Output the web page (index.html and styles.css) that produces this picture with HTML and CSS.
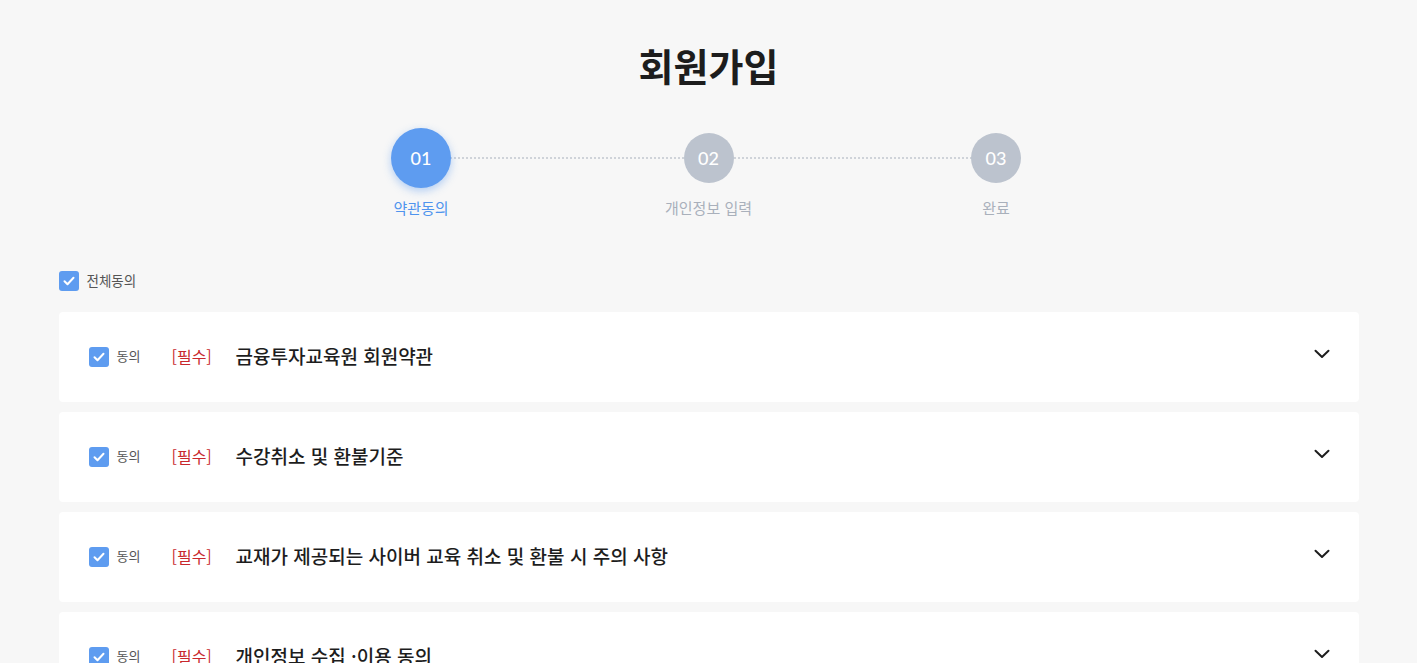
FILE: index.html
```html
<!DOCTYPE html>
<html lang="ko">
<head>
<meta charset="utf-8">
<title>회원가입</title>
<link rel="stylesheet" href="styles.css">
</head>
<body>
<main class="page">
  <h1 class="title">회원가입</h1>

  <div class="steps">
    <div class="steps-line"></div>
    <div class="step active">
      <div class="step-circle">01</div>
      <div class="step-label">약관동의</div>
    </div>
    <div class="step">
      <div class="step-circle">02</div>
      <div class="step-label">개인정보 입력</div>
    </div>
    <div class="step">
      <div class="step-circle">03</div>
      <div class="step-label">완료</div>
    </div>
  </div>

  <label class="all-agree">
    <span class="check"><svg viewBox="0 0 20 20"><path d="M5.5 10.2l3 3 6-6.4" /></svg></span>
    <span class="all-text">전체동의</span>
  </label>

  <ul class="terms">
    <li class="term">
      <span class="check"><svg viewBox="0 0 20 20"><path d="M5.5 10.2l3 3 6-6.4" /></svg></span>
      <span class="agree">동의</span>
      <span class="req">[필수]</span>
      <span class="term-title">금융투자교육원 회원약관</span>
      <svg class="chev" viewBox="0 0 16 10"><path d="M1.5 1.8l6.5 6.2 6.5-6.2" /></svg>
    </li>
    <li class="term">
      <span class="check"><svg viewBox="0 0 20 20"><path d="M5.5 10.2l3 3 6-6.4" /></svg></span>
      <span class="agree">동의</span>
      <span class="req">[필수]</span>
      <span class="term-title">수강취소 및 환불기준</span>
      <svg class="chev" viewBox="0 0 16 10"><path d="M1.5 1.8l6.5 6.2 6.5-6.2" /></svg>
    </li>
    <li class="term">
      <span class="check"><svg viewBox="0 0 20 20"><path d="M5.5 10.2l3 3 6-6.4" /></svg></span>
      <span class="agree">동의</span>
      <span class="req">[필수]</span>
      <span class="term-title">교재가 제공되는 사이버 교육 취소 및 환불 시 주의 사항</span>
      <svg class="chev" viewBox="0 0 16 10"><path d="M1.5 1.8l6.5 6.2 6.5-6.2" /></svg>
    </li>
    <li class="term">
      <span class="check"><svg viewBox="0 0 20 20"><path d="M5.5 10.2l3 3 6-6.4" /></svg></span>
      <span class="agree">동의</span>
      <span class="req">[필수]</span>
      <span class="term-title">개인정보 수집 ·이용 동의</span>
      <svg class="chev" viewBox="0 0 16 10"><path d="M1.5 1.8l6.5 6.2 6.5-6.2" /></svg>
    </li>
  </ul>
</main>
</body>
</html>
```

FILE: styles.css
```css
html, body {
  margin: 0;
  padding: 0;
  background: #f7f7f7;
}
body {
  font-family: "Noto Sans CJK KR", "Noto Sans", sans-serif;
  color: #222;
  overflow: hidden;
}
.page {
  width: 1300px;
  margin: 0 auto;
  padding-top: 41px;
}
.title {
  margin: 0;
  text-align: center;
  font-size: 38px;
  line-height: 48px;
  font-weight: 700;
  color: #1d1d1d;
}
.steps {
  position: relative;
  width: 675px;
  margin: 39px auto 0;
  display: flex;
  justify-content: space-between;
}
.steps-line {
  position: absolute;
  left: 50px;
  right: 50px;
  top: 29px;
  border-top: 2px dotted #cfd3d9;
}
.step {
  position: relative;
  width: 100px;
  display: flex;
  flex-direction: column;
  align-items: center;
}
.step-circle {
  width: 50px;
  height: 50px;
  margin: 5px 0;
  border-radius: 50%;
  background: #bcc3ce;
  color: #fff;
  display: flex;
  align-items: center;
  justify-content: center;
  font-family: "Lato", "Noto Sans", sans-serif;
  font-size: 18px;
  font-weight: 500;
}
.step.active .step-circle {
  width: 60px;
  height: 60px;
  margin: 0;
  background: #5e9cf0;
  box-shadow: 0 3px 8px rgba(94, 156, 240, 0.45);
}
.step-label {
  margin-top: 10px;
  font-size: 15px;
  line-height: 20px;
  color: #a9b0bb;
  white-space: nowrap;
}
.step.active .step-label {
  color: #4f94ee;
}
.all-agree {
  display: flex;
  align-items: center;
  margin-top: 53px;
  height: 20px;
}
.check {
  width: 20px;
  height: 20px;
  flex: none;
  border-radius: 3px;
  background: #5e9cf0;
  display: flex;
}
.check svg {
  width: 20px;
  height: 20px;
  fill: none;
  stroke: #fff;
  stroke-width: 2;
  stroke-linecap: round;
  stroke-linejoin: round;
}
.all-text {
  margin-left: 8px;
  font-size: 13.5px;
  line-height: 20px;
  color: #555;
  margin-top: -2px;
}
.terms {
  list-style: none;
  margin: 21px 0 0;
  padding: 0;
  display: flex;
  flex-direction: column;
  gap: 10px;
}
.term {
  height: 90px;
  background: #fff;
  border-radius: 4px;
  display: flex;
  align-items: center;
  padding: 0 29px 0 30px;
}
.term > span:not(.check) {
  line-height: 24px;
  margin-top: -2px;
}
.agree {
  width: 55px;
  margin-left: 8px;
  font-size: 13px;
  color: #555;
}
.req {
  width: 64px;
  font-size: 16px;
  color: #c8282d;
}
.term-title {
  flex: 1;
  font-size: 19px;
  font-weight: 500;
  color: #1d1d1d;
}
.chev {
  width: 16px;
  height: 10px;
  margin-top: -7px;
  fill: none;
  stroke: #1d1d1d;
  stroke-width: 2;
  stroke-linecap: round;
  stroke-linejoin: round;
}
```
